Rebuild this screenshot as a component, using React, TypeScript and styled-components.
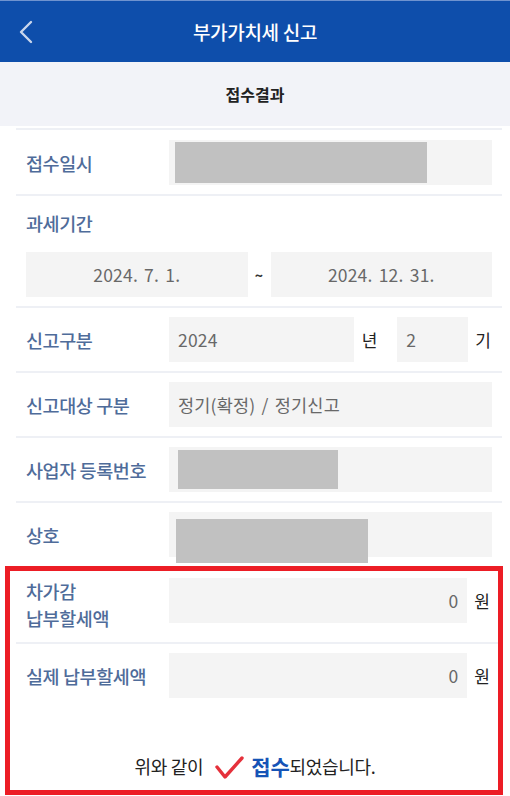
import React from "react";
import styled, { createGlobalStyle } from "styled-components";

const GlobalStyle = createGlobalStyle`
  html, body { margin: 0; padding: 0; background: #ffffff; }
  body {
    font-family: "Noto Sans CJK KR", "Noto Sans", "Liberation Sans", sans-serif;
    -webkit-font-smoothing: antialiased;
  }
  * { box-sizing: border-box; }
`;

const Page = styled.div`
  width: 510px;
  min-height: 796px;
  background: #fff;
  display: flex;
  flex-direction: column;
`;

const Header = styled.header`
  height: 62px;
  background: #0e4eab;
  border-top: 1px solid #6f93cf;
  display: grid;
  grid-template-columns: 56px 1fr 56px;
  align-items: center;
`;

const BackButton = styled.button`
  border: 0;
  background: transparent;
  padding: 0 0 0 18px;
  height: 100%;
  display: flex;
  align-items: center;
  cursor: pointer;
`;

const Title = styled.h1`
  margin: 0;
  text-align: center;
  color: #ffffff;
  font-size: 19px;
  font-weight: 500;
  letter-spacing: -0.3px;
`;

const SubHeader = styled.div`
  height: 64px;
  background: #f2f3f8;
  display: flex;
  align-items: center;
  justify-content: center;
  color: #222;
  font-size: 16px;
  font-weight: 700;
`;

const List = styled.div`
  padding: 2px 8px 0 16px;
`;

const Row = styled.div<{ $stack?: boolean; $top?: boolean }>`
  border-top: 2px solid #eef0f5;
  padding: 9px 10px;
  display: flex;
  flex-direction: ${(p) => (p.$stack ? "column" : "row")};
  align-items: ${(p) => (p.$stack ? "stretch" : p.$top ? "flex-start" : "center")};
  &:first-child { padding-top: 10px; }
`;

const Label = styled.div<{ $tall?: boolean }>`
  width: 143px;
  flex-shrink: 0;
  color: #4f6c9a;
  font-size: 18.5px;
  font-weight: 500;
  letter-spacing: -0.4px;
  white-space: nowrap;
  line-height: ${(p) => (p.$tall ? "27px" : "36px")};
`;

const FieldGroup = styled.div`
  flex: 1 1 auto;
  display: flex;
  align-items: center;
`;

const Field = styled.div<{ $align?: "left" | "center" | "right"; $width?: number }>`
  flex: ${(p) => (p.$width ? "0 0 auto" : "1 1 auto")};
  width: ${(p) => (p.$width ? `${p.$width}px` : "auto")};
  height: 45px;
  background: #f4f4f4;
  padding: 0 9px;
  display: flex;
  align-items: center;
  justify-content: ${(p) =>
    p.$align === "center" ? "center" : p.$align === "right" ? "flex-end" : "flex-start"};
  color: #686868;
  font-size: 17.5px;
  letter-spacing: 0.2px;
  word-spacing: 2px;
`;

const RedactedField = styled(Field)`
  align-items: flex-start;
  padding: 0;
`;

const Redaction = styled.div<{ $x: number; $y: number; $w: number; $h: number }>`
  margin: ${(p) => `${p.$y}px 0 0 ${p.$x}px`};
  width: ${(p) => p.$w}px;
  height: ${(p) => p.$h}px;
  flex-shrink: 0;
  background: #c1c1c1;
`;

const Unit = styled.span<{ $left: number; $right?: number }>`
  margin: ${(p) => `0 ${p.$right ?? 0}px 0 ${p.$left}px`};
  color: #222;
  font-size: 17px;
  flex-shrink: 0;
`;

const DateGrid = styled.div`
  display: grid;
  grid-template-columns: 1fr 23px 1fr;
  align-items: center;
  margin-top: 11px;
`;

const Tilde = styled.span`
  text-align: center;
  color: #333;
  font-size: 14px;
  font-weight: 700;
`;

const Highlight = styled.section`
  margin: 0 7px 5px 5px;
  border: 5px solid #ec1d25;
  padding: 0 0 0 6px;
`;

const HighRow = styled(Row)<{ $first?: boolean }>`
  padding: ${(p) => (p.$first ? "7px 8px 10px 10px" : "9px 8px 9px 10px")};
  border-top: ${(p) => (p.$first ? "0" : "2px solid #eef0f5")};
  &:first-child { padding-top: 7px; }
`;

const Message = styled.p`
  margin: 44px 4px 9px 0;
  display: flex;
  align-items: center;
  justify-content: center;
  color: #222;
  font-size: 18px;
  line-height: 26px;
  letter-spacing: -0.3px;
`;

const Strong = styled.strong`
  color: #1553b6;
  font-size: 21px;
  font-weight: 700;
  margin-left: 7px;
`;

const Check = () => (
  <svg width="30" height="26" viewBox="0 0 30 26" style={{ margin: "4px 0 0 11px" }}>
    <path d="M3 12 L11 22 L28 3" fill="none" stroke="#e5313b" strokeWidth="3.4" strokeLinecap="round" strokeLinejoin="round" />
  </svg>
);

const Chevron = () => (
  <svg width="16" height="24" viewBox="0 0 16 24">
    <path d="M13 2 L3 12 L13 22" fill="none" stroke="#c9d6ec" strokeWidth="2.4" strokeLinecap="round" strokeLinejoin="round" />
  </svg>
);

export default function App() {
  return (
    <Page>
      <GlobalStyle />
      <Header>
        <BackButton aria-label="뒤로">
          <Chevron />
        </BackButton>
        <Title>부가가치세 신고</Title>
        <span />
      </Header>
      <SubHeader>접수결과</SubHeader>
      <List>
        <Row>
          <Label>접수일시</Label>
          <RedactedField>
            <Redaction $x={6} $y={2} $w={252} $h={41} />
          </RedactedField>
        </Row>
        <Row $stack>
          <Label>과세기간</Label>
          <DateGrid>
            <Field $align="center">2024. 7. 1.</Field>
            <Tilde>~</Tilde>
            <Field $align="center">2024. 12. 31.</Field>
          </DateGrid>
        </Row>
        <Row>
          <Label>신고구분</Label>
          <Field>2024</Field>
          <Unit $left={8} $right={20}>년</Unit>
          <Field $width={71}>2</Field>
          <Unit $left={7} $right={1}>기</Unit>
        </Row>
        <Row>
          <Label>신고대상 구분</Label>
          <Field>정기(확정) / 정기신고</Field>
        </Row>
        <Row>
          <Label>사업자 등록번호</Label>
          <RedactedField>
            <Redaction $x={9} $y={3} $w={160} $h={39} />
          </RedactedField>
        </Row>
        <Row>
          <Label>상호</Label>
          <RedactedField>
            <Redaction $x={7} $y={7} $w={192} $h={44} />
          </RedactedField>
        </Row>
      </List>
      <Highlight>
        <HighRow $top $first>
          <Label $tall>
            차가감
            <br />
            납부할세액
          </Label>
          <FieldGroup>
            <Field $align="right">0</Field>
            <Unit $left={7}>원</Unit>
          </FieldGroup>
        </HighRow>
        <HighRow>
          <Label>실제 납부할세액</Label>
          <FieldGroup>
            <Field $align="right">0</Field>
            <Unit $left={7}>원</Unit>
          </FieldGroup>
        </HighRow>
        <Message>
          위와 같이
          <Check />
          <Strong>접수</Strong>되었습니다.
        </Message>
      </Highlight>
    </Page>
  );
}
